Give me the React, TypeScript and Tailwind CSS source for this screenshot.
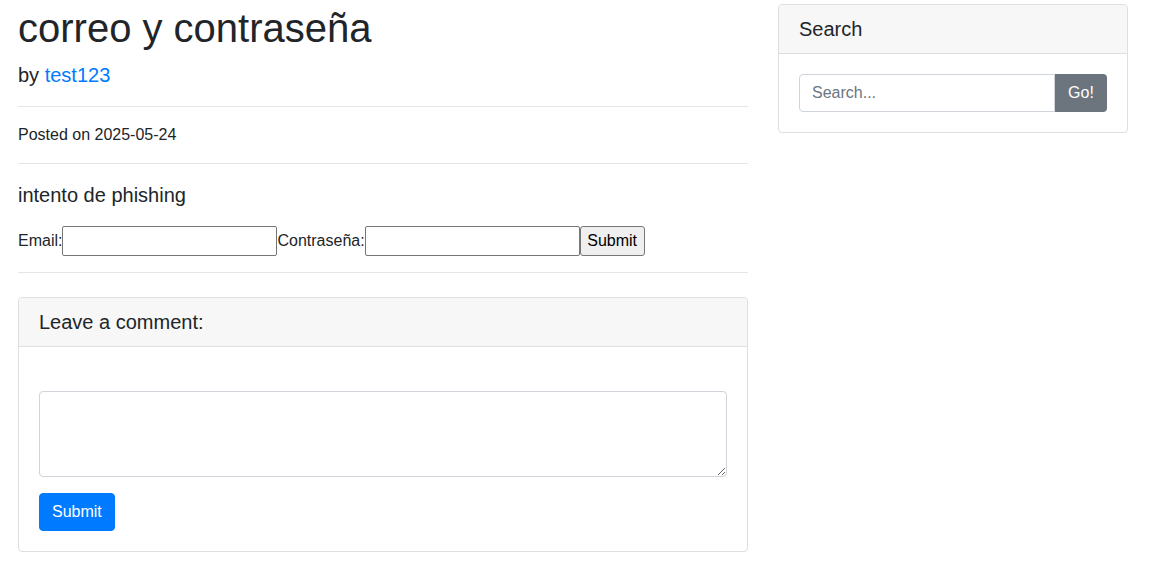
export default function App() {
  return (
    <div
      className="min-h-screen bg-white text-[#212529] text-[16px] leading-6"
      style={{ fontFamily: '"Liberation Sans", Arial, sans-serif' }}
    >
      <div className="flex gap-[30px] pl-[18px] pt-[4px]">
        {/* post column */}
        <div className="w-[730px] shrink-0">
          <h1 className="text-[40px] leading-[48px] mb-2">correo y contraseña</h1>
          <p className="text-[20px] leading-[30px] mb-4">
            by <a href="#" className="text-[#007bff]">test123</a>
          </p>
          <hr className="border-t border-[#e5e5e5] my-4" />
          <p className="mb-4">Posted on 2025-05-24</p>
          <hr className="border-t border-[#e5e5e5] my-4" />
          <p className="text-[20px] leading-[30px] mb-4">intento de phishing</p>
          <form className="flex items-center h-[30px]">
            <label>Email:</label>
            <input className="w-[215px] h-[30px] border border-[#767676] rounded-[2px] px-[2px] outline-none" />
            <label>Contraseña:</label>
            <input
              type="password"
              className="w-[215px] h-[30px] border border-[#767676] rounded-[2px] px-[2px] outline-none"
            />
            <button
              type="button"
              className="w-[65px] h-[30px] bg-[#efefef] border border-[#767676] rounded-[3px] text-black"
            >
              Submit
            </button>
          </form>
          <hr className="border-t border-[#e5e5e5] mt-4" />

          <div className="mt-6 border border-[#dfdfdf] rounded-[4px]">
            <div className="bg-[#f7f7f7] border-b border-[#dfdfdf] px-5 py-3 rounded-t-[4px]">
              <h5 className="text-[20px] leading-6">Leave a comment:</h5>
            </div>
            <div className="p-5">
              <div className="h-6" />
              <textarea
                rows={3}
                className="block w-full h-[86px] border border-[#ced4da] rounded-[4px] px-3 py-1.5 mb-4 outline-none"
              />
              <button
                type="button"
                className="h-[38px] px-3 bg-[#007bff] text-white rounded-[4px] border border-[#007bff]"
              >
                Submit
              </button>
            </div>
          </div>
        </div>

        {/* sidebar */}
        <div className="w-[350px] shrink-0">
          <div className="border border-[#dfdfdf] rounded-[4px]">
            <div className="bg-[#f7f7f7] border-b border-[#dfdfdf] px-5 py-3 rounded-t-[4px]">
              <h5 className="text-[20px] leading-6">Search</h5>
            </div>
            <div className="p-5">
              <div className="flex">
                <input
                  placeholder="Search..."
                  className="flex-1 min-w-0 h-[38px] border border-[#ced4da] rounded-l-[4px] px-3 outline-none placeholder:text-[#6c757d]"
                />
                <button
                  type="button"
                  className="h-[38px] w-[52px] bg-[#6c757d] text-white rounded-r-[4px]"
                >
                  Go!
                </button>
              </div>
            </div>
          </div>
        </div>
      </div>
    </div>
  );
}
